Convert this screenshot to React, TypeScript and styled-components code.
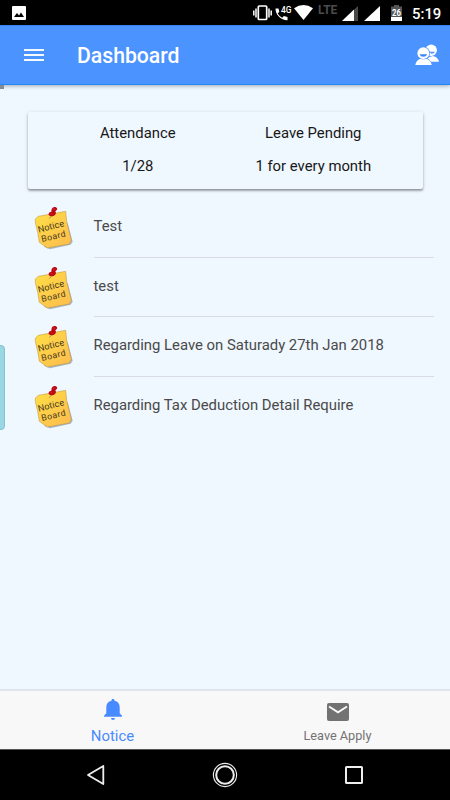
import React from "react";
import styled, { createGlobalStyle } from "styled-components";

const GlobalStyle = createGlobalStyle`
  * { box-sizing: border-box; }
  body { margin: 0; background: #eff7ff; font-family: Roboto, "Liberation Sans", sans-serif; }
  svg { display: block; flex: none; }
`;

const Screen = styled.div`
  width: 450px;
  height: 800px;
  display: flex;
  flex-direction: column;
  overflow: hidden;
  background: #eff7ff;
`;

const StatusBar = styled.header`
  height: 25px;
  flex: none;
  display: flex;
  align-items: flex-start;
  padding: 5px 9px 0 12px;
  background: #000;
  color: #fff;
`;

const StatusItem = styled.div<{ $gap?: number; $top?: number }>`
  margin-left: ${(p) => p.$gap ?? 0}px;
  padding-top: ${(p) => p.$top ?? 0}px;
`;

const Spacer = styled.div`
  flex: 1;
`;

const NetworkLabel = styled.span`
  display: block;
  width: 20px;
  margin-left: 5px;
  color: #4b4b4b;
  font-size: 12px;
  line-height: 10px;
  font-weight: 700;
`;

const Clock = styled.time`
  display: block;
  width: 29px;
  margin-left: 10px;
  font-size: 14.9px;
  line-height: 18px;
  font-weight: 500;
  white-space: nowrap;
`;

const AppBar = styled.div`
  position: relative;
  height: 60px;
  flex: none;
  display: flex;
  align-items: center;
  padding: 0 11px 0 24px;
  background: #4b93ff;
  border-top: 1px solid #3183ef;
  border-bottom: 1px solid #2386f5;
  box-shadow: 0 1px 4px rgba(0, 0, 0, 0.32);
  color: #fff;
`;

const MenuButton = styled.button`
  display: flex;
  flex-direction: column;
  gap: 3px;
  width: 20px;
  padding: 0;
  border: 0;
  background: none;
`;

const MenuLine = styled.span`
  height: 2px;
  background: #f5faff;
`;

const Title = styled.h1`
  flex: 1;
  margin: 1px 0 0 33px;
  font-size: 21.2px;
  line-height: 26px;
  font-weight: 500;
`;

const Content = styled.main`
  position: relative;
  flex: 1;
  padding-top: 27px;
`;

const CornerMark = styled.span`
  position: absolute;
  z-index: 1;
  left: 0;
  top: 0;
  width: 4px;
  height: 4px;
  background: #858b94;
`;

const EdgeHandle = styled.span`
  position: absolute;
  left: -4px;
  top: 260px;
  width: 9px;
  height: 85px;
  border: 1px solid #82c4d0;
  border-radius: 4px;
  background: #9ad7e3;
`;

const Card = styled.section`
  display: grid;
  grid-template-columns: 1fr 1fr;
  width: 395px;
  height: 77px;
  margin-left: 28px;
  padding: 0 22px;
  border-radius: 2px;
  box-shadow: 0 2px 2px rgba(0, 0, 0, 0.24), 0 1px 4px rgba(0, 0, 0, 0.16), 0 1px 1px rgba(0, 0, 0, 0.1);
  background: #eff7ff;
`;

const Stat = styled.div`
  display: flex;
  flex-direction: column;
  align-items: center;
  gap: 13px;
  padding-top: 11px;
  color: #181818;
  font-size: 14.85px;
  line-height: 20px;
  white-space: nowrap;
`;

const NoticeList = styled.ul`
  margin: 9px 0 0;
  padding: 0;
  list-style: none;
`;

const NoticeRow = styled.li`
  display: flex;
  height: 59.5px;
  padding: 0 16px 0 34px;
`;

const NoticeIcon = styled.svg`
  width: 40px;
  height: 44px;
  margin: 9px 19.5px 0 0;
`;

const NoticeText = styled.div`
  flex: 1;
  padding-top: 18.45px;
  border-bottom: 1px solid #d9dce0;
  color: #4a4a4a;
  font-size: 14.87px;
  line-height: 20px;
  white-space: nowrap;

  ${NoticeRow}:last-child & { border-bottom: 0; }
`;

const TabBar = styled.nav`
  height: 61px;
  flex: none;
  display: grid;
  grid-template-columns: 1fr 1fr;
  border-top: 2px solid #dfe5ed;
  border-bottom: 1px solid #555;
  background: #f8f8f8;
`;

const Tab = styled.a<{ $active?: boolean }>`
  display: flex;
  flex-direction: column;
  align-items: center;
  justify-content: space-between;
  padding: ${(p) => (p.$active ? "8px 0 4px" : "12px 0 4px")};
  color: ${(p) => (p.$active ? "#488aff" : "#727272")};
  font-size: ${(p) => (p.$active ? 14.9 : 12.7)}px;
  line-height: 18px;
`;

const SystemNav = styled.footer`
  height: 50px;
  flex: none;
  display: flex;
  align-items: center;
  justify-content: space-between;
  padding: 0 86px;
  background: #000;
`;

function Note() {
  return (
    <NoticeIcon viewBox="27 18 120 132">
      <defs>
        <linearGradient id="paper" x1="0" y1="0" x2="1" y2="1">
          <stop offset="0" stopColor="#ffdf45" />
          <stop offset="1" stopColor="#fdbb4f" />
        </linearGradient>
      </defs>
      <path d="M128 66l15 56-6 9-62 14-18-8z" fill="#8297ad" opacity=".65" />
      <path d="M31 54l9-8 82-15 3 30 14 57-6 11-66 12-24-17-5-30-7-29z" fill="url(#paper)" stroke="#b18b35" strokeWidth="1.4" />
      <path d="M73 53l8-10" stroke="#777" strokeWidth="2" />
      <path d="M80 24q3-7 11-6 7 2 5 8l-5 5q5 9-4 13-11 5-16-3-2-7 8-9z" fill="#bd0810" />
      <path d="M84 24l6 1M77 38l6 1" stroke="#e5343a" strokeWidth="2" />
      <g fill="#40351a" fontFamily="Roboto, sans-serif" fontWeight="400">
        <text transform="translate(41 95) rotate(-14)" fontSize="27" textLength="80">Notice</text>
        <text transform="translate(51 123) rotate(-13)" fontSize="26" textLength="74">Board</text>
      </g>
    </NoticeIcon>
  );
}

const notices = ["Test", "test", "Regarding Leave on Saturady 27th Jan 2018", "Regarding Tax Deduction Detail Require"];

export default function App() {
  return (
    <>
      <GlobalStyle />
      <Screen>
        <StatusBar>
          <StatusItem $top={1}>
            <svg width="14" height="14" viewBox="0 0 14 14">
              <rect width="14" height="14" rx="1" fill="#fff" />
              <path d="M2 11l3-4 2 2.5 2-3 3 4.5z" fill="#000" />
            </svg>
          </StatusItem>
          <Spacer />
          <StatusItem>
            <svg width="19" height="16" viewBox="0 0 19 16" fill="none" stroke="#fff">
              <rect x="5.3" y="1" width="8.4" height="13.5" rx="1" strokeWidth="1.7" />
              <path d="M3 3.5v9M16 3.5v9M.8 5.5v5M18.2 5.5v5" strokeWidth="1.5" />
            </svg>
          </StatusItem>
          <StatusItem $gap={3}>
            <svg width="17" height="16" viewBox="0 0 17 16" fill="#fff">
              <path d="M.5 3.5h3l.8 3.3-1.6 1.7q1.6 2.8 4.5 4.2l1.7-1.6 3.6.8v3.4C6.5 15.5.3 10 .5 3.5z" />
              <text x="6" y="8" fontFamily="Roboto" fontSize="9" fontWeight="500" textLength="10.5" lengthAdjust="spacingAndGlyphs">4G</text>
            </svg>
          </StatusItem>
          <StatusItem $gap={2}>
            <svg width="19" height="16" viewBox="0 0 19 16"><path d="M0 3.3Q9.5-3.3 19 3.3L9.5 15z" fill="#fff" /></svg>
          </StatusItem>
          <NetworkLabel>LTE</NetworkLabel>
          <StatusItem $gap={4} $top={1}>
            <svg width="16" height="15" viewBox="0 0 16 15">
              <path d="M0 15L16 0v15z" fill="#484848" />
              <path d="M0 15L12 3.5V15z" fill="#fff" />
            </svg>
          </StatusItem>
          <StatusItem $gap={6} $top={1}>
            <svg width="16" height="15" viewBox="0 0 16 15"><path d="M0 15L16 0v15z" fill="#fff" /></svg>
          </StatusItem>
          <StatusItem $gap={11}>
            <svg width="11" height="16" viewBox="0 0 11 16">
              <path d="M0 1.5h3V0h5v1.5h3V16H0z" fill="#555" />
              <path d="M0 12h11v4H0z" fill="#fff" />
              <text x="1" y="11" fill="#fff" fontFamily="Roboto" fontSize="8.5" fontWeight="700" textLength="9" lengthAdjust="spacingAndGlyphs">26</text>
            </svg>
          </StatusItem>
          <Clock>5:19</Clock>
        </StatusBar>
        <AppBar>
          <MenuButton aria-label="Menu"><MenuLine /><MenuLine /><MenuLine /></MenuButton>
          <Title>Dashboard</Title>
          <svg width="24" height="22" viewBox="0 0 24 22">
            <g fill="#fff">
              <circle cx="16.2" cy="6.2" r="5.7" />
              <path d="M11 17.8q1-5 7-5.8 5 1 6 5.8z" />
            </g>
            <path d="M14 7.8h6q-1 2-3.5 2z" fill="#4b93ff" />
            <circle cx="8.3" cy="9.2" r="6.6" fill="#4b93ff" />
            <path d="M-1 22q1-6 6.5-8h6q5 2 6 8z" fill="#4b93ff" />
            <g fill="#fff">
              <circle cx="8.3" cy="9.2" r="5.9" />
              <path d="M.2 21q1-4.7 5.2-6.3 3 1.3 6 0 4.5 1.5 5.3 6.3z" />
            </g>
            <path d="M4.5 10.2h7.8q-1 2.6-3.9 2.6t-3.9-2.6z" fill="#3d86ef" />
          </svg>
        </AppBar>
        <Content>
          <CornerMark />
          <EdgeHandle />
          <Card>
            <Stat><span>Attendance</span><span>1/28</span></Stat>
            <Stat><span>Leave Pending</span><span>1 for every month</span></Stat>
          </Card>
          <NoticeList>
            {notices.map((notice) => (
              <NoticeRow key={notice}><Note /><NoticeText>{notice}</NoticeText></NoticeRow>
            ))}
          </NoticeList>
        </Content>
        <TabBar>
          <Tab $active>
            <svg width="18" height="21" viewBox="0 0 18 21" fill="currentColor">
              <path d="M7.5 1.8V1.4a1.5 1.5 0 013 0v.4C14 2.5 15.7 5 15.7 8.2v6L18 16.7v1H0v-1l2.3-2.5v-6C2.3 5 4 2.5 7.5 1.8zM7 19h4q0 2-2 2t-2-2z" />
            </svg>
            <span>Notice</span>
          </Tab>
          <Tab>
            <svg width="22" height="18" viewBox="0 0 22 18">
              <rect width="22" height="18" rx="2" fill="currentColor" />
              <path d="M2 3.5l9 5.8 9-5.8" fill="none" stroke="#f8f8f8" strokeWidth="2" />
            </svg>
            <span>Leave Apply</span>
          </Tab>
        </TabBar>
        <SystemNav>
          <svg width="20" height="22" viewBox="0 0 20 22"><path d="M2 11L17.3 2v18z" fill="none" stroke="#eee" strokeWidth="1.8" strokeLinejoin="round" /></svg>
          <svg width="26" height="26" viewBox="0 0 26 26" fill="none" stroke="#eee">
            <circle cx="13" cy="13" r="11.6" strokeWidth="1.1" />
            <circle cx="13" cy="13" r="8.8" strokeWidth="2" />
          </svg>
          <svg width="20" height="20" viewBox="0 0 20 20"><rect x="2" y="2" width="16" height="16" rx=".6" fill="none" stroke="#eee" strokeWidth="2" /></svg>
        </SystemNav>
      </Screen>
    </>
  );
}
